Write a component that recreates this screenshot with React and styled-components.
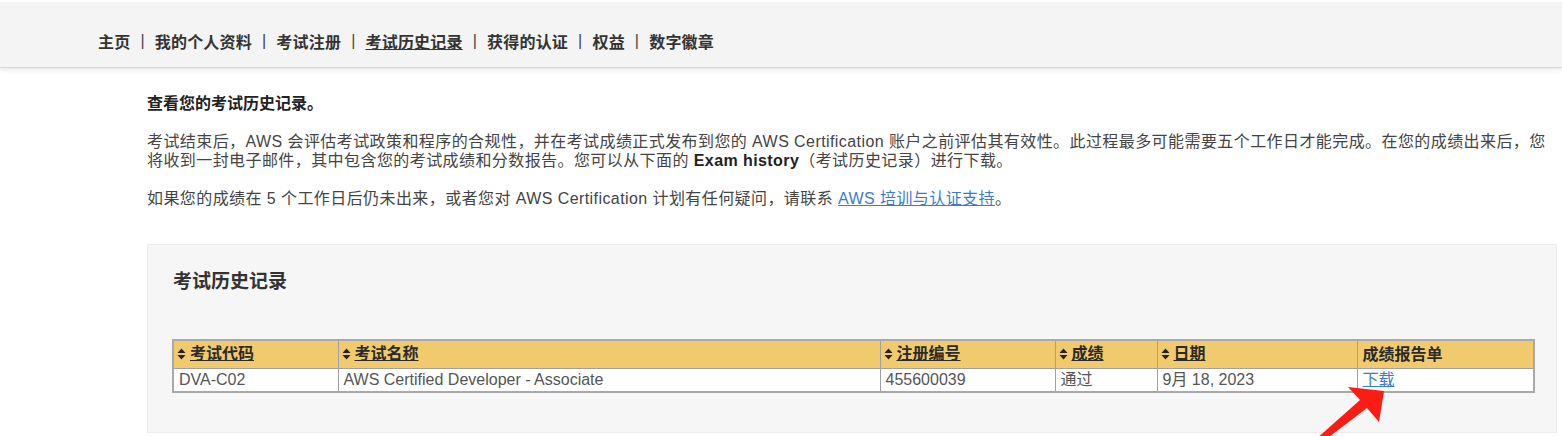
import React from "react";
import styled, { createGlobalStyle } from "styled-components";

const GlobalStyle = createGlobalStyle`
    body {
        margin : 0;
        background : #fff;
        font-family : "Liberation Sans", "Noto Sans CJK SC", sans-serif;
        color : #333;
    }
`

const navItems = ["主页", "我的个人资料", "考试注册", "考试历史记录", "获得的认证", "权益", "数字徽章"];

const columns = [
    { key: "code", label: "考试代码", width: 165, sortable: true },
    { key: "name", label: "考试名称", width: 542, sortable: true },
    { key: "reg", label: "注册编号", width: 175, sortable: true },
    { key: "score", label: "成绩", width: 102, sortable: true },
    { key: "date", label: "日期", width: 200, sortable: true },
    { key: "report", label: "成绩报告单", width: 177, sortable: false },
];

const rows = [
    { code: "DVA-C02", name: "AWS Certified Developer - Associate", reg: "455600039", score: "通过", date: "9月 18, 2023" },
];

const SortIcon = () => (
    <svg width="9" height="12" viewBox="0 0 9 12">
        <polygon points="4.5,0.5 8.5,5 0.5,5" fill="#222" />
        <polygon points="0.5,7 8.5,7 4.5,11.5" fill="#222" />
    </svg>
)

const Arrow = () => (
    <ArrowBox width="90" height="60" viewBox="1305 380 90 60">
        <polygon
            points="1384,391 1348,387 1360,400 1315,440 1325,440 1367,408 1379,422"
            fill="#fb1d14"
        />
    </ArrowBox>
)

const App = () => {
    return (
        <Page>
            <GlobalStyle />
            <Header>
                {navItems.map((item, i) => (
                    <React.Fragment key={item}>
                        {i > 0 && <Sep>|</Sep>}
                        <NavLink active={item === "考试历史记录"}>{item}</NavLink>
                    </React.Fragment>
                ))}
            </Header>
            <Content>
                <Heading>查看您的考试历史记录。</Heading>
                <Para>
                    考试结束后，AWS 会评估考试政策和程序的合规性，并在考试成绩正式发布到您的 AWS Certification 账户之前评估其有效性。此过程最多可能需要五个工作日才能完成。在您的成绩出来后，您将收到一封电子邮件，其中包含您的考试成绩和分数报告。您可以从下面的 <b>Exam history</b>（考试历史记录）进行下载。
                </Para>
                <Para>
                    如果您的成绩在 5 个工作日后仍未出来，或者您对 AWS Certification 计划有任何疑问，请联系 <Link>AWS 培训与认证支持</Link>。
                </Para>
                <Panel>
                    <PanelTitle>考试历史记录</PanelTitle>
                    <Table>
                        <colgroup>
                            {columns.map((c) => (
                                <col key={c.key} style={{ width: c.width }} />
                            ))}
                        </colgroup>
                        <thead>
                            <tr>
                                {columns.map((c) => (
                                    <Th key={c.key}>
                                        {c.sortable ? (
                                            <SortLabel>
                                                <SortIcon />
                                                <u>{c.label}</u>
                                            </SortLabel>
                                        ) : c.label}
                                    </Th>
                                ))}
                            </tr>
                        </thead>
                        <tbody>
                            {rows.map((r) => (
                                <tr key={r.reg}>
                                    <Td>{r.code}</Td>
                                    <Td>{r.name}</Td>
                                    <Td>{r.reg}</Td>
                                    <Td>{r.score}</Td>
                                    <Td>{r.date}</Td>
                                    <Td><Link>下载</Link></Td>
                                </tr>
                            ))}
                        </tbody>
                    </Table>
                </Panel>
            </Content>
            <Arrow />
        </Page>
    )
}

const Page = styled.div`
    position : relative;
    width : 1562px;
    height : 436px;
    overflow : hidden;
`

const Header = styled.header`
    margin-top : 2px;
    height : 66px;
    box-sizing : border-box;
    padding : 12px 0 0 98px;
    display : flex;
    align-items : center;
    background : #f4f4f4;
    border-bottom : 1px solid #d6d6d6;
    box-shadow : 0 3px 4px rgba(0, 0, 0, 0.07);
    font-size : 16px;
    font-weight : bold;
    letter-spacing : 0.2px;
    color : #333;
`

const NavLink = styled.span`
    text-decoration : ${(p) => (p.active ? "underline" : "none")};
    cursor : pointer;
`

const Sep = styled.span`
    margin : 0 10px 0 10px;
    font-weight : normal;
    color : #444;
`

const Content = styled.div`
    width : 1410px;
    margin : 26px 0 0 147px;
`

const Heading = styled.div`
    font-size : 16px;
    line-height : 20px;
    font-weight : bold;
    color : #222;
    margin-bottom : 18px;
`

const Para = styled.p`
    margin : 0 0 19px;
    font-size : 16px;
    line-height : 19px;
    letter-spacing : 0.42px;
    color : #444;

    b {
        color : #222;
    }
`

const Link = styled.a`
    color : #3a7bd0;
    text-decoration : underline;
    cursor : pointer;
`

const Panel = styled.div`
    margin-top : 36px;
    padding : 25px 25px 39px 24px;
    background : #f6f6f6;
    border : 1px solid #ececec;
`

const PanelTitle = styled.div`
    font-size : 19px;
    line-height : 24px;
    font-weight : bold;
    color : #333;
    margin : 0 0 45px 1px;
`

const Table = styled.table`
    width : 1361px;
    table-layout : fixed;
    border-collapse : collapse;
    border : 2px solid #a9a9a9;
    font-size : 16px;
`

const Th = styled.th`
    height : 26px;
    line-height : 26px;
    padding : 0 5px;
    background : #f2ca6e;
    border : 1px solid #a0a0a0;
    text-align : left;
    font-weight : bold;
    color : #2a2a2a;
    white-space : nowrap;
`

const SortLabel = styled.span`
    display : inline-flex;
    align-items : center;
    gap : 4px;
    margin-left : -2px;
`

const Td = styled.td`
    height : 22px;
    line-height : 22px;
    padding : 0 5px;
    background : #fff;
    border : 1px solid #a0a0a0;
    color : #555;
    white-space : nowrap;
`

const ArrowBox = styled.svg`
    position : absolute;
    left : 1305px;
    top : 380px;
`

export default App;
